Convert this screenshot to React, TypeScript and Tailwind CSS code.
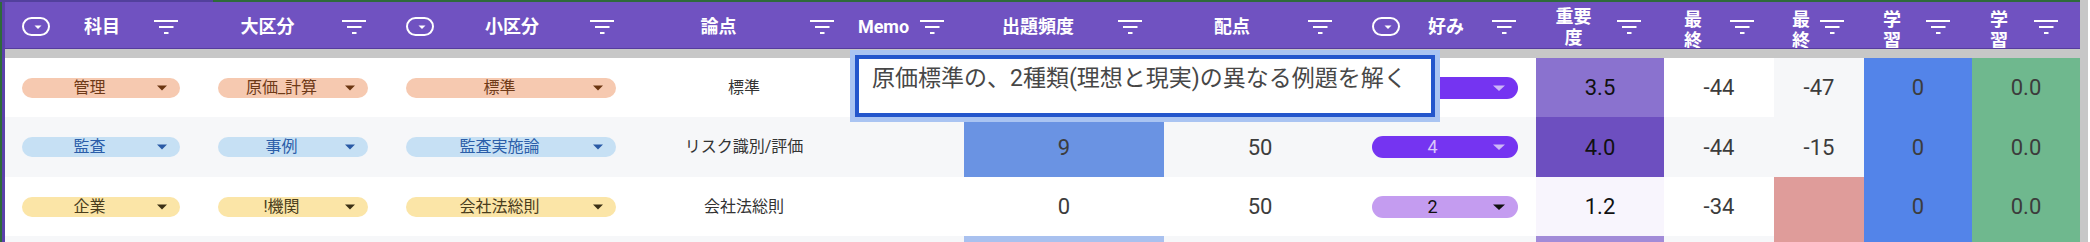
import React from "react";

const GRID =
  "grid grid-cols-[195px_188px_246px_220px_110px_200px_192px_180px_128px_110px_90px_108px_108px]";

function FilterIcon() {
  return (
    <svg width="24" height="14" viewBox="0 0 24 14" className="shrink-0">
      <path d="M0 1H24M5 7H19.5M10 13H14.5" stroke="white" strokeWidth="1.8" fill="none" />
    </svg>
  );
}

function TypeIcon() {
  return (
    <svg width="28" height="19" viewBox="0 0 28 19" className="shrink-0">
      <rect x="1" y="1" width="26" height="17" rx="8.5" fill="none" stroke="white" strokeWidth="2" />
      <path d="M12.5 8.5H19.5L16 12Z" fill="white" />
    </svg>
  );
}

type Head = {
  icon?: boolean;
  lines: string[];
  cls: string;
  textCls: string;
};

const heads: Head[] = [
  { icon: true, lines: ["科目"], cls: "pl-[17px] pr-[22px]", textCls: "" },
  { lines: ["大区分"], cls: "pr-[22px]", textCls: "mr-[7px]" },
  { icon: true, lines: ["小区分"], cls: "pl-[18px] pr-[20px]", textCls: "" },
  { lines: ["論点"], cls: "pr-[20px]", textCls: "mr-[7px]" },
  { lines: ["Memo"], cls: "pr-[20px]", textCls: "mr-[7px]" },
  { lines: ["出題頻度"], cls: "pr-[22px]", textCls: "mr-[6px]" },
  { lines: ["配点"], cls: "pr-[24px]", textCls: "mr-[8px]" },
  { icon: true, lines: ["好み"], cls: "pl-[16px] pr-[20px]", textCls: "" },
  { lines: ["重要", "度"], cls: "pr-[23px]", textCls: "mr-[6px]" },
  { lines: ["最", "終"], cls: "pr-[20px]", textCls: "mr-[8px] mt-[7px]" },
  { lines: ["最", "終"], cls: "pr-[20px]", textCls: "ml-[8px] mt-[7px]" },
  { lines: ["学", "習"], cls: "pr-[22px]", textCls: "mr-[6px] mt-[7px]" },
  { lines: ["学", "習"], cls: "pr-[22px]", textCls: "mr-[8px] mt-[7px]" },
];

type Tone = { bg: string; text: string; arrow: string };
const ORANGE: Tone = { bg: "bg-[#f6c9b0]", text: "text-[#6e3a18]", arrow: "#6b3612" };
const BLUE: Tone = { bg: "bg-[#c6e0f4]", text: "text-[#2b5ea9]", arrow: "#2a5aa5" };
const YELLOW: Tone = { bg: "bg-[#fbe5a7]", text: "text-[#4a3d1c]", arrow: "#3b3015" };
const VIVID: Tone = { bg: "bg-[#7534f1]", text: "text-[#d8c6fa]", arrow: "#cdb7f7" };
const LIGHT: Tone = { bg: "bg-[#c49cf0]", text: "text-[#111111]", arrow: "#111111" };

function Pill({ label, tone, cls, big }: { label: string; tone: Tone; cls: string; big?: boolean }) {
  return (
    <div className={`flex items-center ${cls}`}>
      <div
        className={`flex-1 flex items-center rounded-full ${tone.bg} ${
          big ? "h-[22px]" : "h-[20px]"
        }`}
      >
        <span
          className={`flex-1 text-center ${tone.text} ${
            big ? "text-[18px] leading-[22px]" : "text-[16px] leading-[20px]"
          }`}
        >
          {label}
        </span>
        <svg
          width={big ? 12 : 10}
          height="6"
          viewBox={big ? "0 0 12 6" : "0 0 10 6"}
          className="mr-[13px] shrink-0"
        >
          <path d={big ? "M0 0.5H12L6 6Z" : "M0 0.5H10L5 5.5Z"} fill={tone.arrow} />
        </svg>
      </div>
    </div>
  );
}

function Cell({ children, cls }: { children?: React.ReactNode; cls?: string }) {
  return (
    <div className={`flex items-center justify-center ${cls ?? ""}`}>{children}</div>
  );
}

function Num({ v, dark }: { v: string; dark?: boolean }) {
  return (
    <span className={`text-[22px] ${dark ? "text-[#111111]" : "text-[#3c3c3c]"}`}>{v}</span>
  );
}

function Txt({ v }: { v: string }) {
  return <span className="text-[16px] text-[#333333]">{v}</span>;
}

export default function App() {
  return (
    <div className="relative w-[2090px] h-[242px] overflow-hidden bg-white flex font-['Roboto','Noto_Sans_CJK_JP',sans-serif]">
      <div className="w-[2080px] flex flex-col">
        <div className="h-[2px] flex shrink-0">
          <div className="w-[213px] bg-[#52409c]" />
          <div className="flex-1 bg-[#2e6a3a]" />
        </div>
        <div className="flex flex-1">
          <div className="w-[2px] bg-[#2e6a3a]" />
          <div className="w-[3px] bg-[#5b40aa]" />
          <div className="w-[2075px] flex flex-col">
            {/* header */}
            <div className={`${GRID} h-[46px] bg-[#7052c1]`}>
              {heads.map((h, i) => (
                <div key={i} className={`flex items-center ${h.cls}`}>
                  {h.icon && <TypeIcon />}
                  <div
                    className={`flex-1 flex flex-col items-center text-white font-bold text-[18px] ${
                      h.lines.length > 1 ? "leading-[21px]" : "leading-[24px]"
                    } ${h.textCls}`}
                  >
                    {h.lines.map((l, j) => (
                      <span key={j}>{l}</span>
                    ))}
                  </div>
                  <FilterIcon />
                </div>
              ))}
            </div>
            <div className="h-[1px] bg-[#563c9e]" />
            <div className="h-[9px] bg-[#c7c7c7]" />

            {/* row 1 */}
            <div className={`${GRID} h-[59px] bg-white`}>
              <Pill label="管理" tone={ORANGE} cls="pl-[17px] pr-[20px]" />
              <Pill label="原価_計算" tone={ORANGE} cls="pl-[18px] pr-[20px]" />
              <Pill label="標準" tone={ORANGE} cls="pl-[18px] pr-[18px]" />
              <Cell><Txt v="標準" /></Cell>
              <Cell />
              <Cell />
              <Cell />
              <Pill label="5" tone={VIVID} cls="pl-[16px] pr-[18px]" big />
              <Cell cls="bg-[#8a72cf]"><Num v="3.5" dark /></Cell>
              <Cell><Num v="-44" /></Cell>
              <Cell cls="bg-[#f6f7f9]"><Num v="-47" /></Cell>
              <Cell cls="bg-[#5384e9]"><Num v="0" /></Cell>
              <Cell cls="bg-[#6fb88e]"><Num v="0.0" /></Cell>
            </div>

            {/* row 2 */}
            <div className={`${GRID} h-[60px] bg-[#f6f7f9]`}>
              <Pill label="監査" tone={BLUE} cls="pl-[17px] pr-[20px]" />
              <Pill label="事例" tone={BLUE} cls="pl-[18px] pr-[20px]" />
              <Pill label="監査実施論" tone={BLUE} cls="pl-[18px] pr-[18px]" />
              <Cell><Txt v="リスク識別/評価" /></Cell>
              <Cell />
              <Cell cls="bg-[#6a93e3]"><Num v="9" /></Cell>
              <Cell><Num v="50" /></Cell>
              <Pill label="4" tone={VIVID} cls="pl-[16px] pr-[18px]" big />
              <Cell cls="bg-[#6d4fc0]"><Num v="4.0" dark /></Cell>
              <Cell><Num v="-44" /></Cell>
              <Cell><Num v="-15" /></Cell>
              <Cell cls="bg-[#5384e9]"><Num v="0" /></Cell>
              <Cell cls="bg-[#6fb88e]"><Num v="0.0" /></Cell>
            </div>

            {/* row 3 */}
            <div className={`${GRID} h-[59px] bg-white`}>
              <Pill label="企業" tone={YELLOW} cls="pl-[17px] pr-[20px]" />
              <Pill label="!機関" tone={YELLOW} cls="pl-[18px] pr-[20px]" />
              <Pill label="会社法総則" tone={YELLOW} cls="pl-[18px] pr-[18px]" />
              <Cell><Txt v="会社法総則" /></Cell>
              <Cell />
              <Cell><Num v="0" /></Cell>
              <Cell><Num v="50" /></Cell>
              <Pill label="2" tone={LIGHT} cls="pl-[16px] pr-[18px]" big />
              <Cell cls="bg-[#f8f5fd]"><Num v="1.2" dark /></Cell>
              <Cell><Num v="-34" /></Cell>
              <Cell cls="bg-[#df9c9a]" />
              <Cell cls="bg-[#5384e9]"><Num v="0" /></Cell>
              <Cell cls="bg-[#6fb88e]"><Num v="0.0" /></Cell>
            </div>

            {/* row 4 (partial) */}
            <div className={`${GRID} flex-1 bg-[#f6f7f9]`}>
              <div />
              <div />
              <div />
              <div />
              <div />
              <div className="bg-[#a9c1ef]" />
              <div />
              <div />
              <div className="bg-[#a28bd8]" />
              <div />
              <div className="bg-[#df9c9a]" />
              <div className="bg-[#5384e9]" />
              <div className="bg-[#6fb88e]" />
            </div>
          </div>
        </div>
      </div>
      <div className="w-[8px] bg-[#c7c7c7]" />
      <div className="flex-1 bg-white" />

      {/* cell editor overlay */}
      <div className="absolute left-[850px] top-[50px] w-[590px] h-[72px] border-[5px] border-[#aac4f2]">
        <div className="w-full h-full border-[4px] border-[#2456cc] bg-white pl-[13px] pt-[5px]">
          <span className="text-[23px] leading-[30px] text-[#474747] whitespace-nowrap">
            原価標準の、2種類(理想と現実)の異なる例題を解く
          </span>
        </div>
      </div>
    </div>
  );
}
